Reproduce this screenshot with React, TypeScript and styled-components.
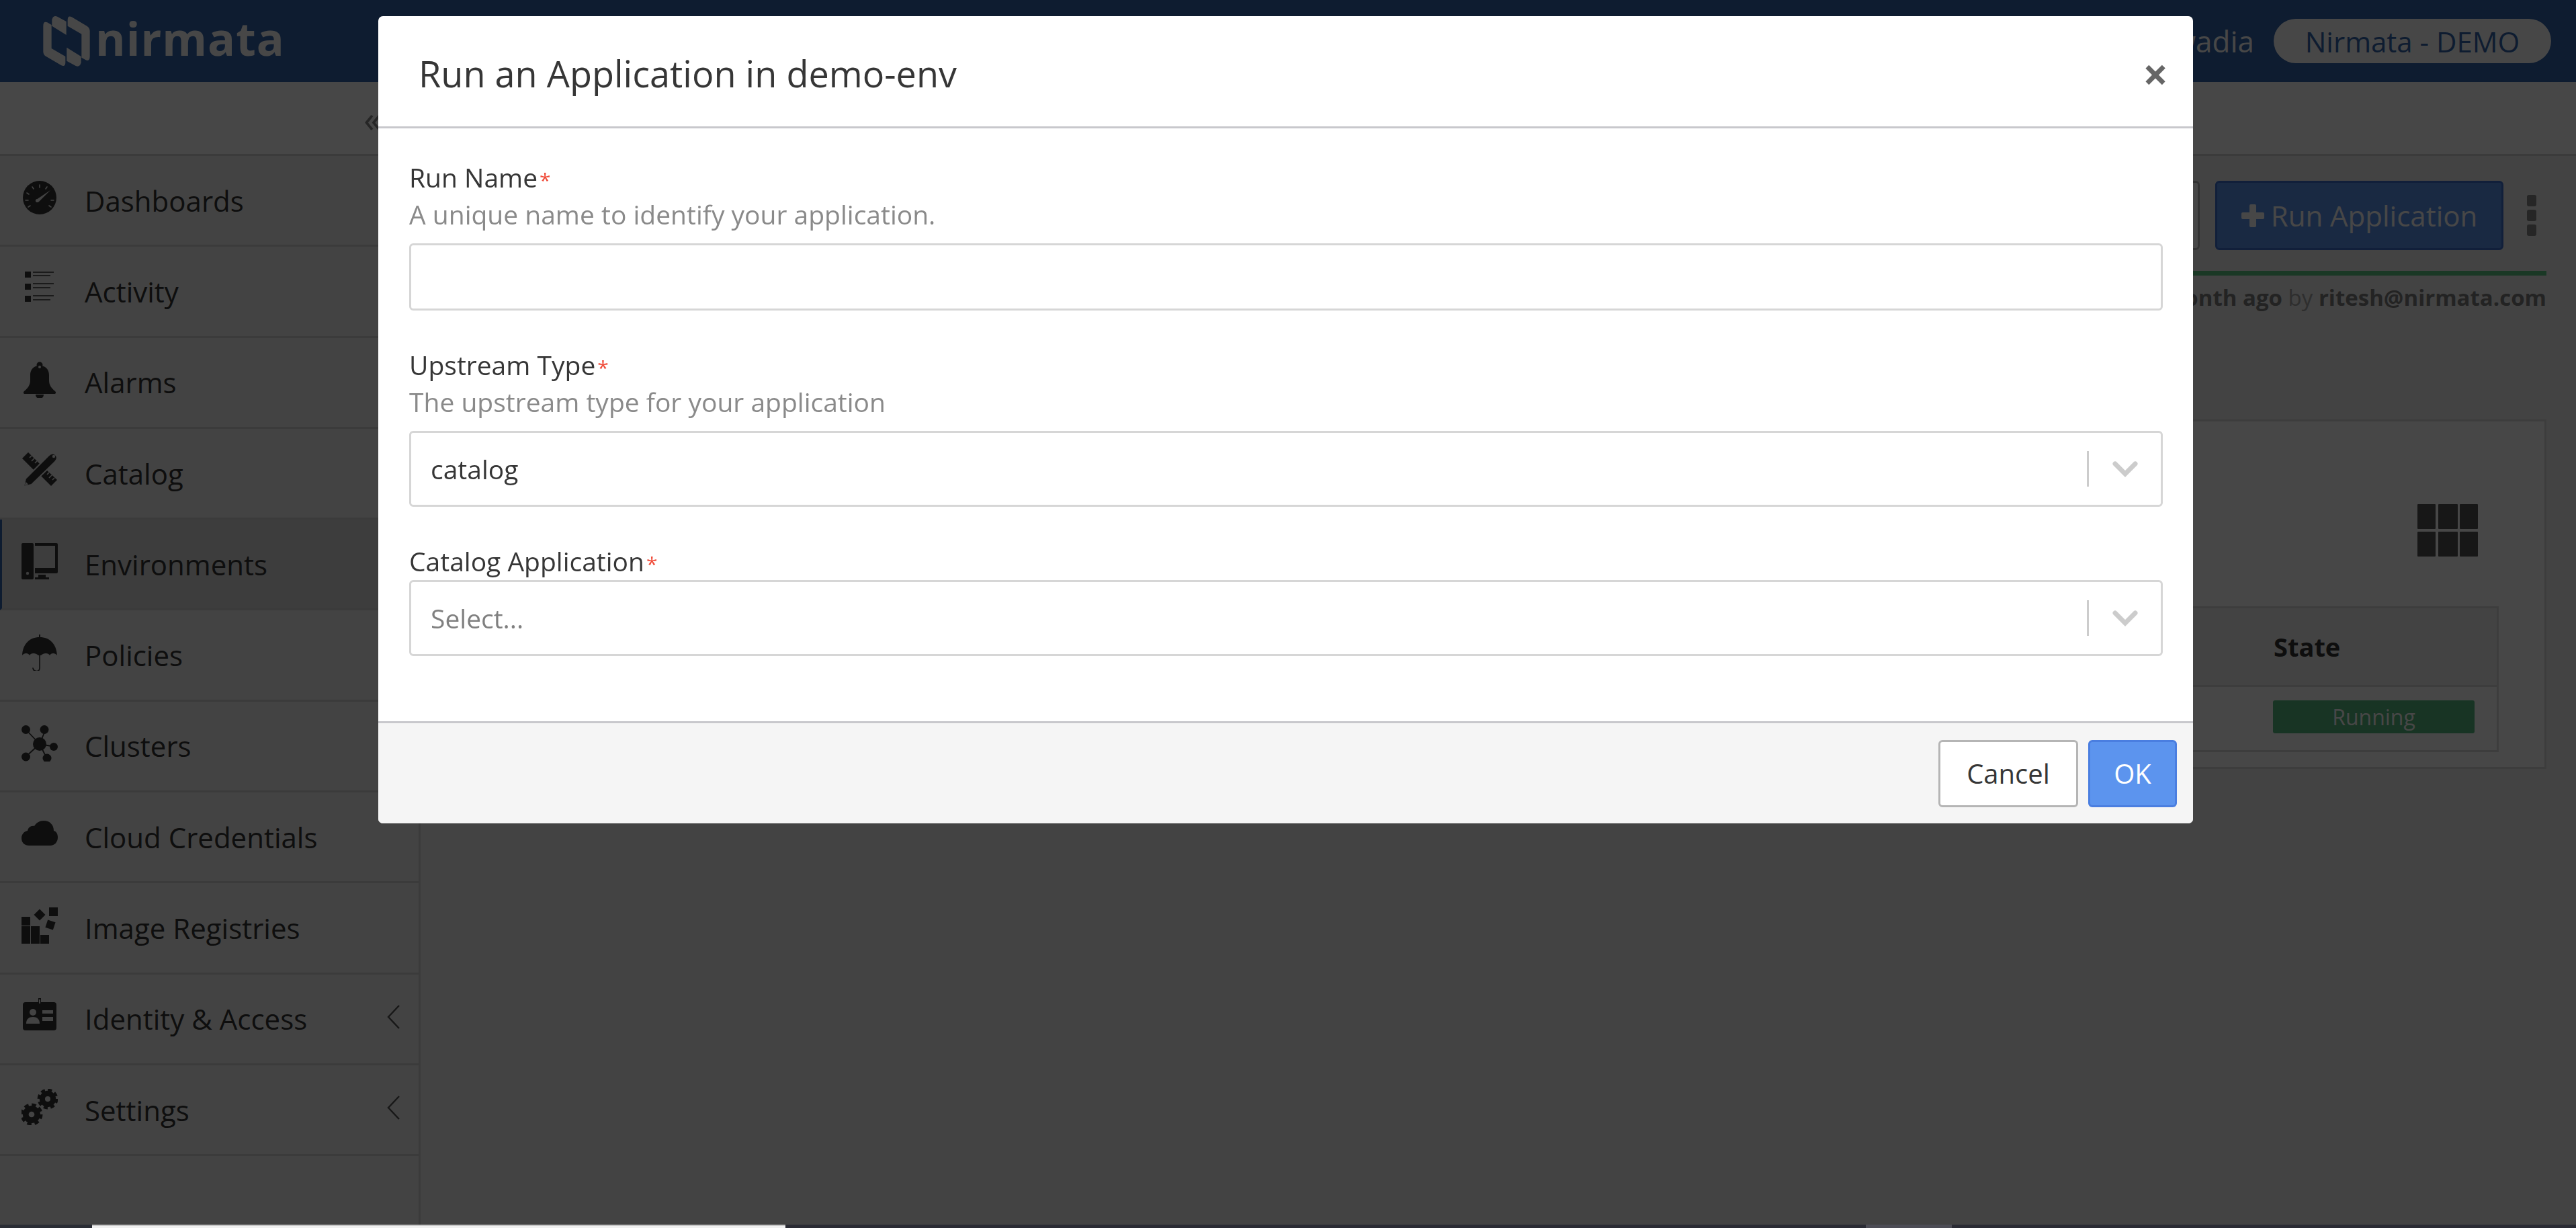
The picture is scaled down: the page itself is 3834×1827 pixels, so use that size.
import { FC, ReactNode } from "react";
import styled, { createGlobalStyle } from "styled-components";

const GlobalStyle = createGlobalStyle`
   html, body {
      margin: 0;
      height: 100%;
      overflow: hidden;
      background: #efefef;
   }
   * {
      box-sizing: border-box;
   }
   body {
      font-family: "Open Sans", "Liberation Sans", sans-serif;
      color: #333;
   }
`;

const Page = styled.div`
   height: 1827px;
   display: flex;
   flex-direction: column;
`;

const Header = styled.header`
   height: 122px;
   flex: none;
   display: flex;
   align-items: center;
   justify-content: space-between;
   padding: 0 37px 0 62px;
   background: #3264ab;
   color: #fff;
`;

const Logo = styled.div`
   display: flex;
   align-items: center;
   gap: 6px;
   svg {
      width: 74px;
      height: 78px;
   }
`;

const LogoName = styled.span`
   font-family: "Open Sans", sans-serif;
   font-size: 68px;
   font-weight: 700;
   letter-spacing: 1px;
   line-height: 1;
   margin-top: -8px;
`;

const Account = styled.div`
   display: flex;
   align-items: center;
   gap: 29px;
   font-size: 42px;
`;

const AccountName = styled.span`
   font-size: 44px;
`;

const Tenant = styled.div`
   height: 66px;
   width: 413px;
   border-radius: 33px;
   background: #fff;
   color: #3264ab;
   display: flex;
   align-items: center;
   justify-content: center;
`;

const Main = styled.div`
   flex: 1;
   min-height: 0;
   display: flex;
`;

const Sidebar = styled.aside`
   width: 626px;
   flex: none;
   border-right: 3px solid #d4d4d4;
`;

const Collapse = styled.div`
   height: 110px;
   background: #fff;
   border-bottom: 3px solid #d4d4d4;
   display: flex;
   align-items: center;
   justify-content: flex-end;
   padding-right: 55px;
   font-size: 54px;
   color: #888;
`;

const NavItem = styled.div<{ $active?: boolean }>`
   height: 135.3px;
   display: flex;
   align-items: center;
   gap: 40px;
   padding-left: ${(props) => (props.$active ? "29px" : "32px")};
   padding-right: 27px;
   border-bottom: 3px solid #d4d4d4;
   border-left: ${(props) => (props.$active ? "3px solid #3264ab" : "0")};
   background: ${(props) => (props.$active ? "#d9d9d9" : "transparent")};
   font-size: 42px;
   svg.nav-icon {
      width: 54px;
      height: 54px;
      flex: none;
      margin-top: -8px;
   }
`;

const NavLabel = styled.span`
   flex: 1;
`;

const Content = styled.main`
   flex: 1;
   min-width: 0;
   display: flex;
   flex-direction: column;
`;

const Toolbar = styled.div`
   height: 110px;
   flex: none;
   background: #fff;
   border-bottom: 3px solid #d4d4d4;
`;

const Body = styled.div`
   flex: 1;
   padding: 37px 44px 0 40px;
`;

const Actions = styled.div`
   display: flex;
   align-items: center;
   justify-content: flex-end;
   gap: 21px;
`;

const GhostButton = styled.div`
   width: 300px;
   height: 103px;
   border: 3px solid #b5b5b5;
   border-radius: 6px;
   background: #fff;
   margin-right: 2px;
`;

const RunButton = styled.div`
   width: 429px;
   height: 103px;
   border: 3px solid #3d6fd0;
   border-radius: 6px;
   background: #5c94ee;
   color: #fff;
   font-size: 42px;
   display: flex;
   align-items: center;
   justify-content: center;
   gap: 10px;
   svg {
      width: 34px;
      height: 34px;
   }
`;

const Kebab = styled.div`
   width: 14px;
   margin: 0 15px 0 14px;
   display: flex;
   flex-direction: column;
   gap: 5px;
   span {
      height: 17px;
      border-radius: 3px;
      background: #888;
   }
`;

const Progress = styled.div`
   height: 7px;
   margin-top: 31px;
   background: #5dc885;
`;

const Meta = styled.div`
   margin-top: 10px;
   text-align: right;
   font-size: 33px;
   line-height: 46px;
   color: #a6a6a6;
   b {
      font-weight: 700;
      color: #7d7d7d;
   }
`;

const Card = styled.section`
   margin-top: 158px;
   height: 520px;
   background: #fff;
   border: 3px solid #dcdcdc;
   display: flex;
   flex-direction: column;
   padding: 123px 68px 0 40px;
`;

const GridIcon = styled.svg`
   width: 90px;
   height: 78px;
   align-self: flex-end;
   margin-right: 31px;
`;

const Table = styled.div`
   margin-top: 74px;
   border: 3px solid #dcdcdc;
   height: 217px;
   background: #fff;
`;

const TableHead = styled.div`
   height: 117px;
   border-bottom: 3px solid #dcdcdc;
   background: #f0f0f0;
   display: flex;
   align-items: center;
   justify-content: flex-end;
   font-size: 38px;
   font-weight: 700;
`;

const StateHead = styled.span`
   width: 332px;
`;

const TableRow = styled.div`
   height: 88px;
   display: flex;
   align-items: center;
   justify-content: flex-end;
   padding-right: 33px;
`;

const StateBadge = styled.div`
   width: 300px;
   height: 49px;
   border-radius: 3px;
   background: #56ba80;
   color: #fff;
   font-size: 32px;
   display: flex;
   align-items: center;
   justify-content: center;
`;

const ScrollStrip = styled.div`
   height: 5px;
   flex: none;
   position: relative;
   z-index: 2;
   display: flex;
   background: #2a2b34;
`;

const StripSegment = styled.div<{ $width: number; $color: string; $top?: string }>`
   width: ${(props) => props.$width}px;
   flex: none;
   background: ${(props) => props.$color};
   border-top: ${(props) => (props.$top ? `2px solid ${props.$top}` : "0")};
`;

const Backdrop = styled.div`
   position: fixed;
   top: 0;
   left: 0;
   right: 0;
   bottom: 5px;
   background: rgba(0, 0, 0, 0.72);
   display: flex;
   justify-content: center;
   align-items: flex-start;
   padding: 24px 7px 0 0;
`;

const Modal = styled.div`
   width: 2701px;
   height: 1201px;
   background: #fff;
   border-radius: 7px;
   display: flex;
   flex-direction: column;
   overflow: hidden;
`;

const ModalHead = styled.div`
   height: 167px;
   flex: none;
   border-bottom: 3px solid #c8c8cc;
   display: flex;
   align-items: center;
   justify-content: space-between;
   padding: 6px 37px 0 60px;
`;

const ModalTitle = styled.h1`
   margin: 0;
   font-size: 54px;
   font-weight: 400;
   color: #363636;
`;

const CloseButton = styled.span`
   font-size: 66px;
   font-weight: 700;
   line-height: 1;
   color: #666;
`;

const ModalBody = styled.div`
   flex: 1;
   padding: 45px 45px 0 46px;
`;

const Field = styled.div`
   margin-bottom: 53px;
`;

const Label = styled.div`
   font-size: 39px;
   line-height: 56px;
   color: #363636;
   span {
      color: #f04a38;
      font-size: 30px;
      line-height: 1;
      margin-left: 3px;
   }
`;

const Help = styled.div`
   font-size: 39px;
   line-height: 54px;
   color: #8a8a8a;
   margin-bottom: 16px;
`;

const TextInput = styled.div`
   height: 100px;
   border: 3px solid #d6d6d6;
   border-radius: 6px;
`;

const SelectBox = styled.div`
   height: 113px;
   border: 3px solid #d6d6d6;
   border-radius: 6px;
   display: flex;
   align-items: center;
`;

const SelectValue = styled.div<{ $placeholder?: boolean }>`
   flex: 1;
   padding-left: 29px;
   font-size: 39px;
   color: ${(props) => (props.$placeholder ? "#808080" : "#363636")};
`;

const SelectDivider = styled.div`
   width: 3px;
   align-self: stretch;
   margin: 27px 0;
   background: #ccc;
`;

const SelectArrow = styled.svg`
   width: 38px;
   height: 24px;
   margin: 0 34px 0 35px;
`;

const ModalFoot = styled.div`
   height: 152px;
   flex: none;
   border-top: 3px solid #c8c8cc;
   background: #f5f5f5;
   display: flex;
   align-items: center;
   justify-content: flex-end;
   gap: 15px;
   padding: 0 24px 0 0;
`;

const FootButton = styled.div<{ $primary?: boolean }>`
   height: 100px;
   width: ${(props) => (props.$primary ? "132px" : "208px")};
   border: 3px solid ${(props) => (props.$primary ? "#4a7ee0" : "#b5b5b5")};
   border-radius: 6px;
   background: ${(props) => (props.$primary ? "#5c94ee" : "#fff")};
   color: ${(props) => (props.$primary ? "#fff" : "#363636")};
   font-size: 40px;
   display: flex;
   align-items: center;
   justify-content: center;
`;

const NavSvg: FC<{ children: ReactNode }> = ({ children }) => (
   <svg className="nav-icon" viewBox="0 0 54 54" fill="#333">
      {children}
   </svg>
);

const DashboardIcon = () => (
   <NavSvg>
      <circle cx="27" cy="27" r="25" />
      <g stroke="#efefef" strokeWidth="1.6" strokeLinecap="round">
         <path d="M27 8v4M16 11l2 3M38 11l-2 3M8 20l3 2M6 31h4M48 31h-4M10 41l3-2M44 41l-3-2" />
      </g>
      <path d="M22 30 L43 16 L26 33 Z" fill="#efefef" />
      <circle cx="23.5" cy="31.5" r="2.6" fill="#efefef" />
   </NavSvg>
);

const ActivityIcon = () => (
   <NavSvg>
      <rect x="5" y="2" width="9" height="9" />
      <rect x="5" y="20" width="9" height="9" />
      <rect x="5" y="38" width="9" height="9" />
      <path
         d="M17 3h31M17 8h26M17 20h31M17 26h26M17 38h31M17 44h26"
         stroke="#333"
         strokeWidth="1.6"
         fill="none"
      />
   </NavSvg>
);

const BellIcon = () => (
   <NavSvg>
      <circle cx="27" cy="5" r="4.5" />
      <path d="M27 6c-9 0-14 6-14 14v8c0 7-4 12-9 16-2 2-1 4 1 4h44c2 0 3-2 1-4-5-4-9-9-9-16v-8c0-8-5-14-14-14z" />
      <path d="M21 49h12c0 4-3 6-6 6s-6-2-6-6z" />
      <circle cx="27" cy="8" r="2" fill="#efefef" />
   </NavSvg>
);

const CatalogIcon = () => (
   <NavSvg>
      <path d="M1 9 L10 0 L27 17 L18 26 Z" />
      <path d="M28 34 L37 26 L53 41 L44 50 Z" />
      <path
         d="M15 5l-3 3M19 9l-4 4M23 13l-3 3M41 30l-3 3M45 34l-4 4M49 38l-3 3"
         stroke="#efefef"
         strokeWidth="1.6"
      />
      <path
         d="M3 51 L6 39 L40 5 C44 1 49 1 51 4 C54 7 53 11 49 15 L15 48 Z"
         stroke="#efefef"
         strokeWidth="2"
      />
      <circle cx="48" cy="6" r="2.2" fill="#efefef" />
      <path d="M4.5 49.5 L6.5 44 L10 47.5 Z" fill="#efefef" />
   </NavSvg>
);

const EnvironmentIcon = () => (
   <NavSvg>
      <path d="M2 0h14a2 2 0 0 1 2 2v50a2 2 0 0 1-2 2H2a2 2 0 0 1-2-2V2a2 2 0 0 1 2-2z" />
      <circle cx="9" cy="45" r="2.2" fill="#d9d9d9" />
      <path fillRule="evenodd" d="M20 0h32a2 2 0 0 1 2 2v41a2 2 0 0 1-2 2H20zM20 4v33h30V4z" />
      <path d="M20 54v-3h5v-4h11v4h5v3z" />
   </NavSvg>
);

const PoliciesIcon = () => (
   <NavSvg>
      <rect x="26" y="0" width="2" height="6" />
      <path d="M27 4C12 4 2 14 1 31c3-4 9-4 11 0 2-4 9-4 13 0h4c4-4 11-4 13 0 2-4 8-4 11 0C52 14 42 4 27 4z" />
      <path
         d="M27 28v22c0 6-9 6-10 0"
         fill="none"
         stroke="#333"
         strokeWidth="1.6"
         strokeLinecap="round"
      />
   </NavSvg>
);

const ClustersIcon = () => (
   <NavSvg>
      <path
         d="M27 28 L6 6 M27 28 L36 6 M27 28 L50 32 M27 28 L38 50 M27 28 L6 47"
         stroke="#333"
         strokeWidth="1.8"
      />
      <circle cx="27" cy="28" r="10" />
      <circle cx="6.5" cy="6.5" r="6.5" />
      <circle cx="34" cy="6.5" r="6.5" />
      <circle cx="48" cy="32" r="6" />
      <circle cx="38" cy="49" r="6.5" />
      <circle cx="6.5" cy="47" r="6.5" />
   </NavSvg>
);

const CloudIcon = () => (
   <NavSvg>
      <path d="M11 44C5 44 0 40 0 33c0-6 4-10 9-11 1-5 5-8 10-7 3-5 8-8 14-8 9 0 15 6 15 15 4 1 6 5 6 10 0 7-5 12-11 12z" />
   </NavSvg>
);

const RegistryIcon = () => (
   <NavSvg>
      <rect x="0" y="14" width="13" height="13" />
      <rect x="0" y="28" width="13" height="13" />
      <rect x="14" y="28" width="13" height="13" />
      <rect x="0" y="41" width="13" height="13" />
      <rect x="14" y="41" width="13" height="13" />
      <rect x="28" y="41" width="13" height="13" />
      <rect x="41" y="0" width="13" height="13" />
      <rect x="21" y="5" width="12" height="12" transform="rotate(45 27 11)" />
      <rect x="37" y="20" width="12" height="12" transform="rotate(18 43 26)" />
   </NavSvg>
);

const IdentityIcon = () => (
   <NavSvg>
      <rect x="25" y="0" width="4" height="12" />
      <rect x="2" y="6" width="50" height="42" rx="4" />
      <rect x="26" y="2" width="2" height="6" fill="#efefef" />
      <circle cx="17" cy="21" r="5" fill="#efefef" />
      <path d="M7 38c0-7 4-10 10-10s10 3 10 10z" fill="#efefef" />
      <rect x="31" y="18" width="16" height="5" fill="#efefef" />
      <rect x="31" y="28" width="16" height="6" fill="#efefef" />
   </NavSvg>
);

const Gear: FC<{ cx: number; cy: number; r: number }> = ({ cx, cy, r }) => (
   <g>
      <circle cx={cx} cy={cy} r={r * 0.58} fill="none" stroke="#333" strokeWidth={r * 0.58} />
      <circle
         cx={cx}
         cy={cy}
         r={r * 0.92}
         fill="none"
         stroke="#333"
         strokeWidth={r * 0.36}
         strokeDasharray={`${r * 0.42} ${r * 0.3}`}
      />
   </g>
);

const SettingsIcon = () => (
   <NavSvg>
      <Gear cx={39} cy={15} r={14} />
      <Gear cx={15} cy={38} r={15} />
   </NavSvg>
);

const LeftChevron = styled.svg`
   width: 20px;
   height: 36px;
   margin-top: -6px;
`;

const ExpandArrow = () => (
   <LeftChevron viewBox="0 0 20 36" fill="none" stroke="#555" strokeWidth="2.4">
      <path d="M18 1 L2 18 L18 35" />
   </LeftChevron>
);

const navItems = [
   { label: "Dashboards", icon: <DashboardIcon /> },
   { label: "Activity", icon: <ActivityIcon /> },
   { label: "Alarms", icon: <BellIcon /> },
   { label: "Catalog", icon: <CatalogIcon /> },
   { label: "Environments", icon: <EnvironmentIcon />, active: true },
   { label: "Policies", icon: <PoliciesIcon /> },
   { label: "Clusters", icon: <ClustersIcon /> },
   { label: "Cloud Credentials", icon: <CloudIcon /> },
   { label: "Image Registries", icon: <RegistryIcon /> },
   { label: "Identity & Access", icon: <IdentityIcon />, expand: true },
   { label: "Settings", icon: <SettingsIcon />, expand: true },
];

const Arrow = () => (
   <SelectArrow viewBox="0 0 38 24" fill="none" stroke="#ccc" strokeWidth="7" strokeLinecap="round">
      <path d="M4 4 L19 19 L34 4" />
   </SelectArrow>
);

const App = () => {
   return (
      <Page>
         <GlobalStyle />
         <Header>
            <Logo>
               <svg viewBox="37 28 208 234" fill="#fff">
                  <path d="M37 78Q37 55 55 62L74 73V178L136 214V240Q136 262 118 254L50 214Q37 206 37 192Z" />
                  <path d="M76 50Q82 28 100 36L140 58V118L76 78Z" />
                  <g transform="rotate(180 141 146)">
                     <path d="M37 78Q37 55 55 62L74 73V178L136 214V240Q136 262 118 254L50 214Q37 206 37 192Z" />
                     <path d="M76 50Q82 28 100 36L140 58V118L76 78Z" />
                  </g>
               </svg>
               <LogoName>nirmata</LogoName>
            </Logo>
            <Account>
               <AccountName>Jim Bugwadia</AccountName>
               <Tenant>Nirmata - DEMO</Tenant>
            </Account>
         </Header>
         <Main>
            <Sidebar>
               <Collapse>«</Collapse>
               {navItems.map((item) => (
                  <NavItem key={item.label} $active={item.active}>
                     {item.icon}
                     <NavLabel>{item.label}</NavLabel>
                     {item.expand && <ExpandArrow />}
                  </NavItem>
               ))}
            </Sidebar>
            <Content>
               <Toolbar />
               <Body>
                  <Actions>
                     <GhostButton />
                     <RunButton>
                        <svg viewBox="0 0 34 34" fill="#fff">
                           <path d="M12 2a2 2 0 0 1 2-2h6a2 2 0 0 1 2 2v10h10a2 2 0 0 1 2 2v6a2 2 0 0 1-2 2H22v10a2 2 0 0 1-2 2h-6a2 2 0 0 1-2-2V22H2a2 2 0 0 1-2-2v-6a2 2 0 0 1 2-2h10z" />
                        </svg>
                        Run Application
                     </RunButton>
                     <Kebab>
                        <span />
                        <span />
                        <span />
                     </Kebab>
                  </Actions>
                  <Progress />
                  <Meta>
                     <b>1 month ago</b> by <b>ritesh@nirmata.com</b>
                  </Meta>
                  <Card>
                     <GridIcon viewBox="0 0 90 78" fill="#555">
                        <rect x="0" y="0" width="27" height="37" rx="1" />
                        <rect x="31" y="0" width="29" height="37" rx="1" />
                        <rect x="63" y="0" width="27" height="37" rx="1" />
                        <rect x="0" y="41" width="27" height="37" rx="1" />
                        <rect x="31" y="41" width="29" height="37" rx="1" />
                        <rect x="63" y="41" width="27" height="37" rx="1" />
                     </GridIcon>
                     <Table>
                        <TableHead>
                           <StateHead>State</StateHead>
                        </TableHead>
                        <TableRow>
                           <StateBadge>Running</StateBadge>
                        </TableRow>
                     </Table>
                  </Card>
               </Body>
            </Content>
         </Main>
         <ScrollStrip>
            <StripSegment $width={137} $color="#2a2d35" />
            <StripSegment $width={1032} $color="#f0f0f0" $top="#c8c8c8" />
            <StripSegment $width={1608} $color="#2a2b34" />
            <StripSegment $width={128} $color="#4d4d56" />
         </ScrollStrip>
         <Backdrop>
            <Modal>
               <ModalHead>
                  <ModalTitle>Run an Application in demo-env</ModalTitle>
                  <CloseButton>×</CloseButton>
               </ModalHead>
               <ModalBody>
                  <Field>
                     <Label>
                        Run Name<span>*</span>
                     </Label>
                     <Help>A unique name to identify your application.</Help>
                     <TextInput />
                  </Field>
                  <Field>
                     <Label>
                        Upstream Type<span>*</span>
                     </Label>
                     <Help>The upstream type for your application</Help>
                     <SelectBox>
                        <SelectValue>catalog</SelectValue>
                        <SelectDivider />
                        <Arrow />
                     </SelectBox>
                  </Field>
                  <Field>
                     <Label>
                        Catalog Application<span>*</span>
                     </Label>
                     <SelectBox>
                        <SelectValue $placeholder>Select...</SelectValue>
                        <SelectDivider />
                        <Arrow />
                     </SelectBox>
                  </Field>
               </ModalBody>
               <ModalFoot>
                  <FootButton>Cancel</FootButton>
                  <FootButton $primary>OK</FootButton>
               </ModalFoot>
            </Modal>
         </Backdrop>
      </Page>
   );
};

export default App;
